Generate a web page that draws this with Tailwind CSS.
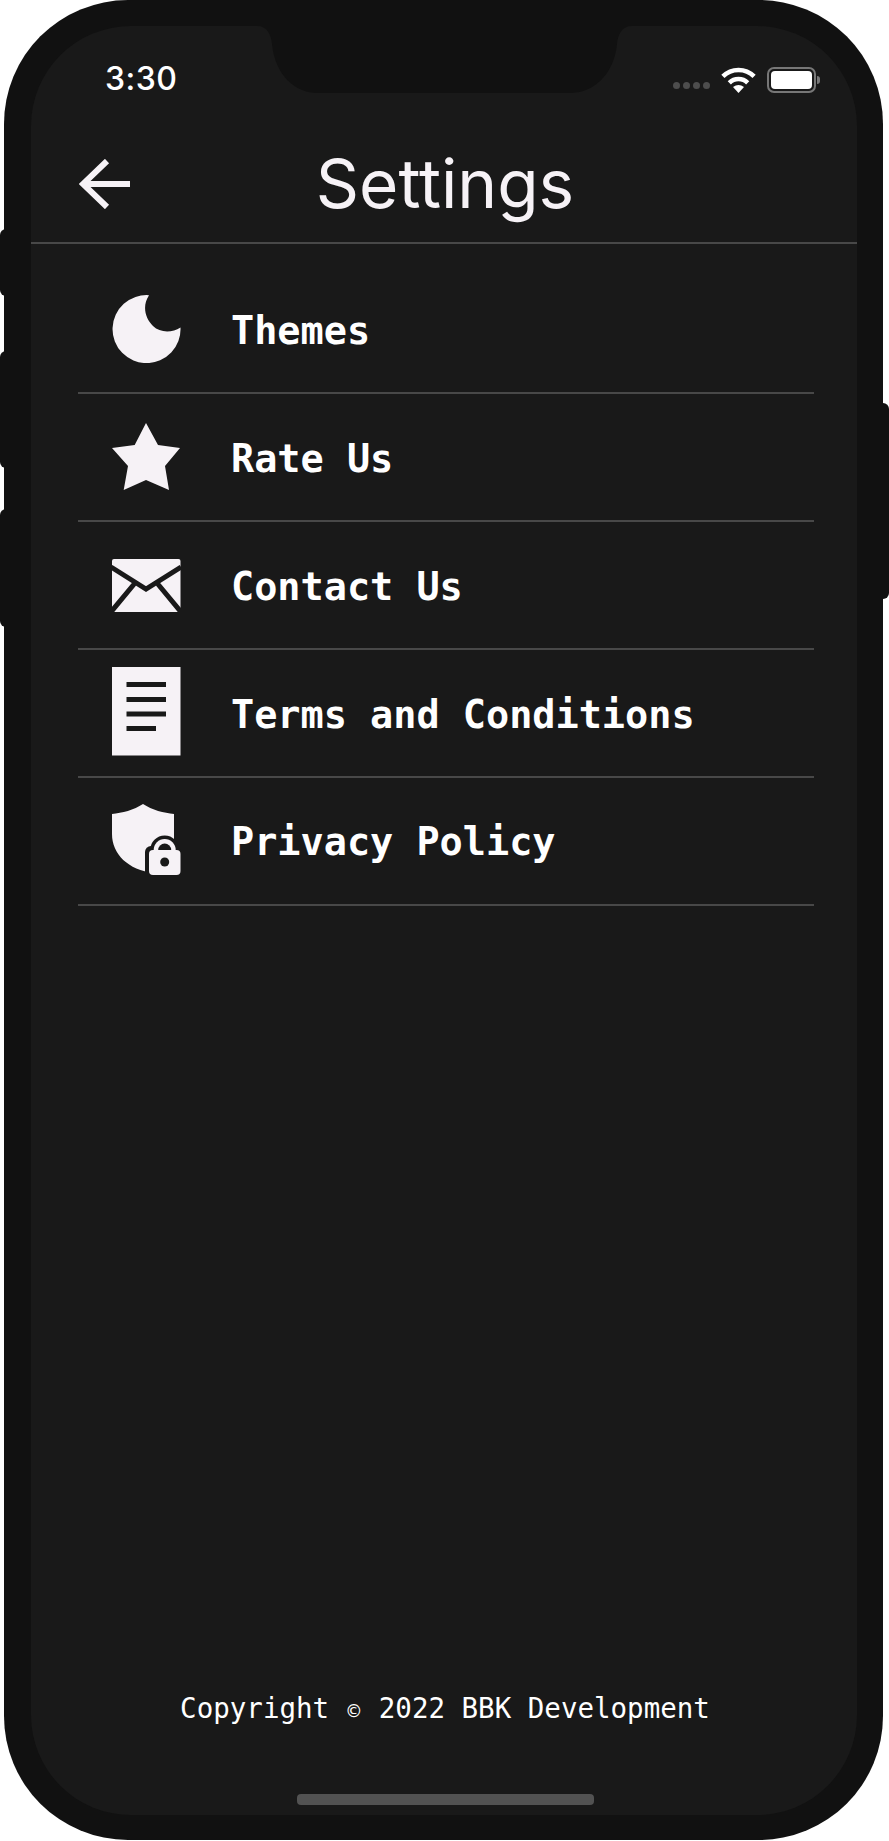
<!DOCTYPE html>
<html lang="en">
<head>
  <meta charset="UTF-8" />
  <meta name="viewport" content="width=device-width, initial-scale=1" />
  <title>Settings</title>
  <script src="https://cdn.jsdelivr.net/npm/@tailwindcss/browser@4"></script>
</head>
<body class="bg-white">
  <div class="relative w-[889px] h-[1841px] overflow-hidden">
    <!-- side buttons -->
    <div class="absolute left-0 top-[229px] w-[8px] h-[67px] rounded-l-[6px] bg-[#111111]"></div>
    <div class="absolute left-0 top-[351px] w-[8px] h-[117px] rounded-l-[6px] bg-[#111111]"></div>
    <div class="absolute left-0 top-[509px] w-[8px] h-[118px] rounded-l-[6px] bg-[#111111]"></div>
    <div class="absolute right-0 top-[403px] w-[10px] h-[196px] rounded-r-[6px] bg-[#111111]"></div>

    <!-- phone frame -->
    <div class="relative ml-[4px] w-[879px] h-[1840px] rounded-[124px] bg-[#111111] pt-[26px] pl-[27px]">
      <div class="relative flex flex-col w-[826px] h-[1789px] rounded-[100px] bg-[#191919] text-[#f6f2f6]">
        <!-- notch -->
        <svg class="absolute left-0 top-0" width="826" height="68" viewBox="0 0 826 68">
          <path fill="#111111" d="M226 0C236 0 240 8 241 18C244 49 264 67 287 67H539C562 67 583 49 586 18C587 8 591 0 601 0Z" />
        </svg>

        <!-- status bar -->
        <div class="relative flex h-[68px] shrink-0 items-end justify-between pl-[74px] pr-[37px]">
          <span class="font-['Inter',sans-serif] font-medium text-[32px] leading-none text-white mb-[-1px] tracking-[0.5px]">3:30</span>
          <div class="flex items-end gap-[10px] mb-[1px]">
            <div class="flex gap-[3px] mb-[4px] mr-[1px]">
              <span class="w-[7px] h-[7px] rounded-full bg-[#4d4d4d]"></span>
              <span class="w-[7px] h-[7px] rounded-full bg-[#4d4d4d]"></span>
              <span class="w-[7px] h-[7px] rounded-full bg-[#4d4d4d]"></span>
              <span class="w-[7px] h-[7px] rounded-full bg-[#4d4d4d]"></span>
            </div>
            <svg class="mr-[1px]" width="35" height="26" viewBox="0 0 35 26">
              <path fill="none" stroke="#fff" stroke-width="4.5" d="M1.9 9.4A22 22 0 0 1 33.1 9.4" />
              <path fill="none" stroke="#fff" stroke-width="4.5" d="M8.3 15.8A13 13 0 0 1 26.7 15.8" />
              <path fill="#fff" d="M17.5 26L12 20Q17.5 16 23 20Z" />
            </svg>
            <div class="flex items-center">
              <div class="w-[49px] h-[26px] rounded-[7px] border-2 border-[#777777] p-[2px]">
                <div class="w-full h-full rounded-[4px] bg-white"></div>
              </div>
              <div class="w-[3px] h-[8px] rounded-r-[3px] bg-[#777777] ml-[1px]"></div>
            </div>
          </div>
        </div>

        <!-- header -->
        <header class="grid grid-cols-[1fr_auto_1fr] items-center h-[150px] shrink-0 border-b-2 border-[#484848] pt-[32px] pl-[48px]">
          <svg width="52" height="50" viewBox="0 0 52 50">
            <path fill="none" stroke="#f6f2f6" stroke-width="6" d="M51 25H4M28 2L4 25L28 48" />
          </svg>
          <h1 class="font-['Inter',sans-serif] font-normal text-[67.5px] leading-none ml-[-46px]">Settings</h1>
          <div></div>
        </header>

        <!-- menu -->
        <ul class="mt-[22px] ml-[47px] mr-[43px] flex flex-col">
          <li class="flex items-center h-[128px] border-b-2 border-[#484848] pl-[34px] gap-[50px]">
            <svg class="shrink-0" width="69" height="68" viewBox="0 0 69 68">
              <path fill="#f6f2f6" d="M37 0.2A34 34 0 1 0 68.5 32.5C60 38 48 38 41 31C33 23 30 11 37 0.2Z" />
            </svg>
            <span class="font-['DejaVu_Sans_Mono',monospace] font-bold text-[38.5px] leading-none text-white mt-[4px]">Themes</span>
          </li>
          <li class="flex items-center h-[128px] border-b-2 border-[#484848] pl-[34px] gap-[50px]">
            <svg class="shrink-0" width="69" height="68" viewBox="0 0 69 68">
              <path fill="#f6f2f6" d="M34 0L46 22L68 25L53 43L57 67L34 57L11.7 67L16 43L0 25L22.7 22Z" />
            </svg>
            <span class="font-['DejaVu_Sans_Mono',monospace] font-bold text-[38.5px] leading-none text-white mt-[4px]">Rate Us</span>
          </li>
          <li class="flex items-center h-[128px] border-b-2 border-[#484848] pl-[34px] gap-[50px]">
            <svg class="shrink-0" width="69" height="53" viewBox="0 0 69 53">
              <rect width="68.5" height="53" rx="2" fill="#f6f2f6" />
              <path fill="none" stroke="#191919" stroke-width="5" d="M-1 8L34 30L69 8M-1 53L23 24M69 53L45 24" />
            </svg>
            <span class="font-['DejaVu_Sans_Mono',monospace] font-bold text-[38.5px] leading-none text-white mt-[4px]">Contact Us</span>
          </li>
          <li class="flex items-center h-[128px] border-b-2 border-[#484848] pl-[34px] gap-[50px]">
            <svg class="shrink-0 mt-[-3px]" width="69" height="89" viewBox="0 0 69 89">
              <rect width="68.5" height="88.5" fill="#f6f2f6" />
              <path fill="#191919" d="M14.5 15H54V20H14.5ZM14.5 30H54V35H14.5ZM14.5 44.5H54V49.5H14.5ZM14.5 59H44V64H14.5Z" />
            </svg>
            <span class="font-['DejaVu_Sans_Mono',monospace] font-bold text-[38.5px] leading-none text-white mt-[4px]">Terms and Conditions</span>
          </li>
          <li class="flex items-center h-[128px] border-b-2 border-[#484848] pl-[34px] gap-[50px]">
            <svg class="shrink-0 mt-[-3px]" width="69" height="71" viewBox="0 0 69 71">
              <path fill="#f6f2f6" d="M31 0C40 6 52 9 62 10V60L42 69C16 66 0 50 0 30V10C10 9 22 6 31 0Z" />
              <rect x="33" y="42" width="36" height="29" rx="6" fill="#191919" />
              <path fill="#191919" d="M33 60H45V71H33Z" />
              <circle cx="52.7" cy="46" r="14.5" fill="#191919" />
              <circle cx="52.7" cy="46" r="11" fill="#f6f2f6" />
              <circle cx="52.7" cy="46" r="6.5" fill="#191919" />
              <rect x="37" y="46" width="31.5" height="25" rx="4" fill="#f6f2f6" />
              <circle cx="52.7" cy="58" r="4.5" fill="#191919" />
            </svg>
            <span class="font-['DejaVu_Sans_Mono',monospace] font-bold text-[38.5px] leading-none text-white mt-[2px]">Privacy Policy</span>
          </li>
        </ul>

        <!-- footer -->
        <footer class="mt-auto flex flex-col items-center">
          <p class="font-['DejaVu_Sans_Mono',monospace] font-normal text-[27.5px] leading-none text-white mb-[72px] ml-[2px]">Copyright <span class="inline-block w-[16.55px] text-center text-[21px]">©</span> 2022 BBK Development</p>
          <div class="w-[297px] h-[11px] rounded-[4px] bg-[#525252] mb-[10px] ml-[3px]"></div>
        </footer>
      </div>
    </div>
  </div>
</body>
</html>
